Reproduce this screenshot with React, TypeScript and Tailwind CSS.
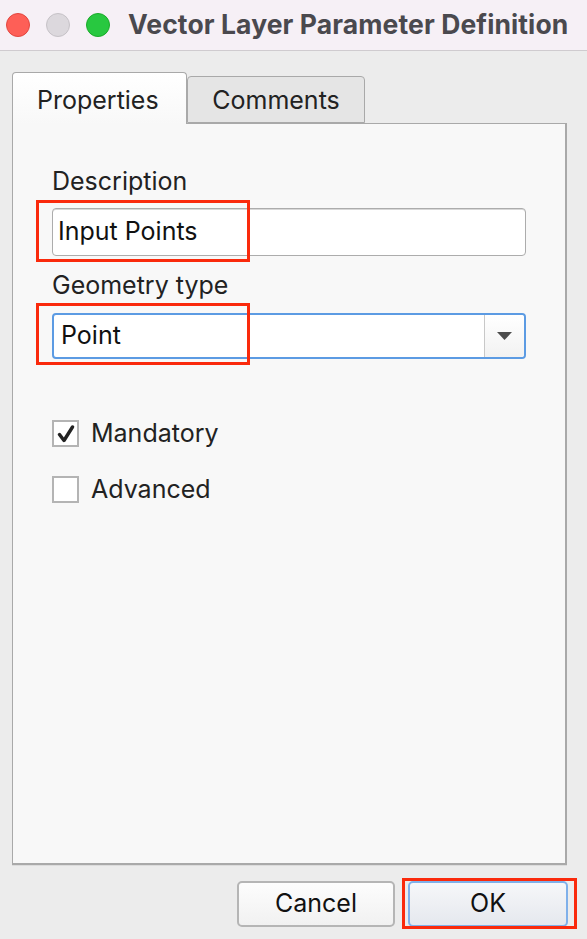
import React from "react";

export default function App() {
  return (
    <div
      className="w-[587px] h-[939px] bg-[#ececec] flex flex-col overflow-hidden text-[#1f1f1f]"
      style={{ fontFamily: "Inter, 'Noto Sans', sans-serif" }}
    >
      {/* Title bar */}
      <div className="h-[51px] shrink-0 bg-[#f6f0f6] border-b border-[#cfcbcf] flex items-center">
        <div className="flex items-center gap-[16px] pl-[6px]">
          <span className="w-[24px] h-[24px] rounded-full bg-[#fe5f57] border border-[#e2463f]" />
          <span className="w-[24px] h-[24px] rounded-full bg-[#dcd8dd] border border-[#c6c2c7]" />
          <span className="w-[24px] h-[24px] rounded-full bg-[#28c840] border border-[#1aab29]" />
        </div>
        <div className="ml-[18px] text-[26.5px] font-bold text-[#4a494e] tracking-[0.1px] whitespace-nowrap">
          Vector Layer Parameter Definition
        </div>
      </div>

      {/* Body */}
      <div className="flex-1 flex flex-col pl-[12px] pr-[20px] pt-[21px] pb-[12px]">
        {/* Tabs */}
        <div className="flex items-end h-[52px] relative z-10 -mb-px">
          <div className="w-[175px] h-[52px] border border-b-0 border-[#a9a9a9] rounded-t-[4px] bg-gradient-to-b from-[#ffffff] to-[#f8f8f8] flex items-center pl-[24px] pt-[4px] text-[25px] text-[#222]">
            Properties
          </div>
          <div className="w-[178px] h-[47px] border border-[#a9a9a9] rounded-t-[4px] bg-[#e5e5e5] flex items-center justify-center pt-[3px] text-[25px] text-[#222] mb-px">
            Comments
          </div>
        </div>

        {/* Pane */}
        <div className="flex-1 bg-[#f8f8f8] border border-[#a9a9a9] border-r-2 border-b-2 shadow-[0_1px_0_#dcdcdc] px-[39px] pt-[41px]">
          <div className="text-[25px] leading-[32px] text-[#222]">Description</div>
          <div className="relative mt-[11px]">
            <div className="h-[48px] bg-white border border-[#acacac] rounded-[4px] shadow-[inset_0_1px_0_#d8d8d8] flex items-center pl-[5px] text-[25px] text-[#111]">
              Input Points
            </div>
            <div className="absolute left-[-16px] top-[-8px] w-[214px] h-[62px] border-[3px] border-[#fa2a0c] pointer-events-none" />
          </div>

          <div className="text-[25px] leading-[32px] text-[#222] mt-[13px]">Geometry type</div>
          <div className="relative mt-[12px]">
            <div className="h-[46px] bg-white border-2 border-[#5c9be3] rounded-[4px] flex items-stretch">
              <div className="flex-1 flex items-center pl-[7px] text-[25px] text-[#111]">Point</div>
              <div className="w-[40px] border-l border-[#c8c8c8] bg-gradient-to-b from-[#ffffff] to-[#f2f2f2] flex items-center justify-center rounded-r-[3px]">
                <svg width="15" height="8" viewBox="0 0 15 8">
                  <path d="M0 0 L15 0 L7.5 8 Z" fill="#4d4d4d" />
                </svg>
              </div>
            </div>
            <div className="absolute left-[-16px] top-[-10px] w-[214px] h-[62px] border-[3px] border-[#fa2a0c] pointer-events-none" />
          </div>

          <div className="mt-[56px] flex items-center gap-[12px]">
            <div className="w-[27px] h-[27px] border-2 border-[#b4b4b4] bg-white flex items-center justify-center">
              <svg width="18" height="18" viewBox="0 0 18 18">
                <path d="M2.5 9.5 L7 15.5 L15.5 2" fill="none" stroke="#222" strokeWidth="3.4" strokeLinecap="round" strokeLinejoin="round" />
              </svg>
            </div>
            <span className="text-[25px] text-[#222]">Mandatory</span>
          </div>
          <div className="mt-[18px] flex items-center gap-[12px]">
            <div className="w-[27px] h-[27px] border-2 border-[#b4b4b4] bg-white" />
            <span className="text-[25px] text-[#222]">Advanced</span>
          </div>
        </div>

        {/* Buttons */}
        <div className="mt-[16px] flex justify-end gap-[13px] -mr-[1px]">
          <button className="w-[158px] h-[46px] rounded-[5px] border-2 border-[#b5b5b5] bg-gradient-to-b from-[#fdfdfd] to-[#f1f1f1] text-[25px] text-[#111]">
            Cancel
          </button>
          <div className="relative">
            <button className="w-[160px] h-[46px] rounded-[5px] border-2 border-[#7fb0ea] bg-gradient-to-b from-[#f6f7f9] to-[#e5e8ee] text-[25px] text-[#111]">
              OK
            </button>
            <div className="absolute left-[-6px] top-[-3px] w-[175px] h-[51px] border-[3px] border-[#fa2a0c] pointer-events-none" />
          </div>
        </div>
      </div>
    </div>
  );
}
